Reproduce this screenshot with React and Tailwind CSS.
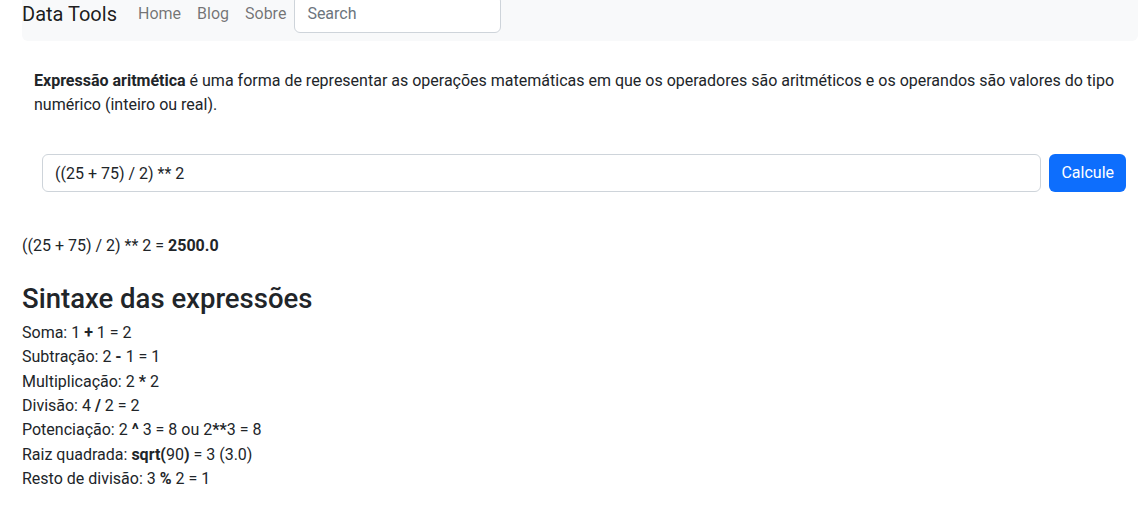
export default function App() {
  const rules = [
    <>Soma: 1 <b>+</b> 1 = 2</>,
    <>Subtração: 2 <b>-</b> 1 = 1</>,
    <>Multiplicação: 2 <b>*</b> 2</>,
    <>Divisão: 4 <b>/</b> 2 = 2</>,
    <>Potenciação: 2 <b>^</b> 3 = 8 ou 2<b>**</b>3 = 8</>,
    <>Raiz quadrada: <b>sqrt(</b>90<b>)</b> = 3 (3.0)</>,
    <>Resto de divisão: 3 <b>%</b> 2 = 1</>,
  ];
  return (
    <div className="min-h-[531px] bg-white text-[#212529] text-[16px] leading-[24px] font-['Roboto',_'Segoe_UI',_sans-serif]">
      <nav className="ml-[22px] mr-[3px] -mt-[14px] h-[55px] bg-[#f8f9fa] rounded-b-md flex items-center">
        <span className="text-[20px] leading-[30px] text-black/90 mr-[13px]">Data Tools</span>
        <a className="px-2 text-black/55">Home</a>
        <a className="px-2 text-black/55">Blog</a>
        <a className="px-2 text-black/55">Sobre</a>
        <input
          className="w-[207px] h-[38px] border border-[#ced4da] rounded-md bg-white px-3 outline-none placeholder:text-[#6c757d]"
          placeholder="Search"
        />
      </nav>

      <p className="mt-[28px] pl-[34px] pr-[16px]">
        <b>Expressão aritmética</b> é uma forma de representar as operações matemáticas em que os operadores são aritméticos e os operandos são valores do tipo numérico (inteiro ou real).
      </p>

      <div className="mt-[37px] pl-[42px] pr-[15px] flex gap-2">
        <input
          className="flex-1 h-[38px] border border-[#ced4da] rounded-md bg-white px-3 text-[#212529] outline-none"
          defaultValue="((25 + 75) / 2) ** 2"
        />
        <button className="h-[38px] px-3 rounded-md bg-[#0d6efd] text-white">Calcule</button>
      </div>

      <p className="mt-[42px] pl-[22px]">
        ((25 + 75) / 2) ** 2 = <b>2500.0</b>
      </p>

      <h2 className="mt-[23px] pl-[22px] text-[27.5px] leading-[36px] font-medium">Sintaxe das expressões</h2>

      <div className="mt-1 pl-[22px] flex flex-col">
        {rules.map((r, i) => (
          <div key={i} className="leading-[24.33px]">{r}</div>
        ))}
      </div>
    </div>
  );
}
